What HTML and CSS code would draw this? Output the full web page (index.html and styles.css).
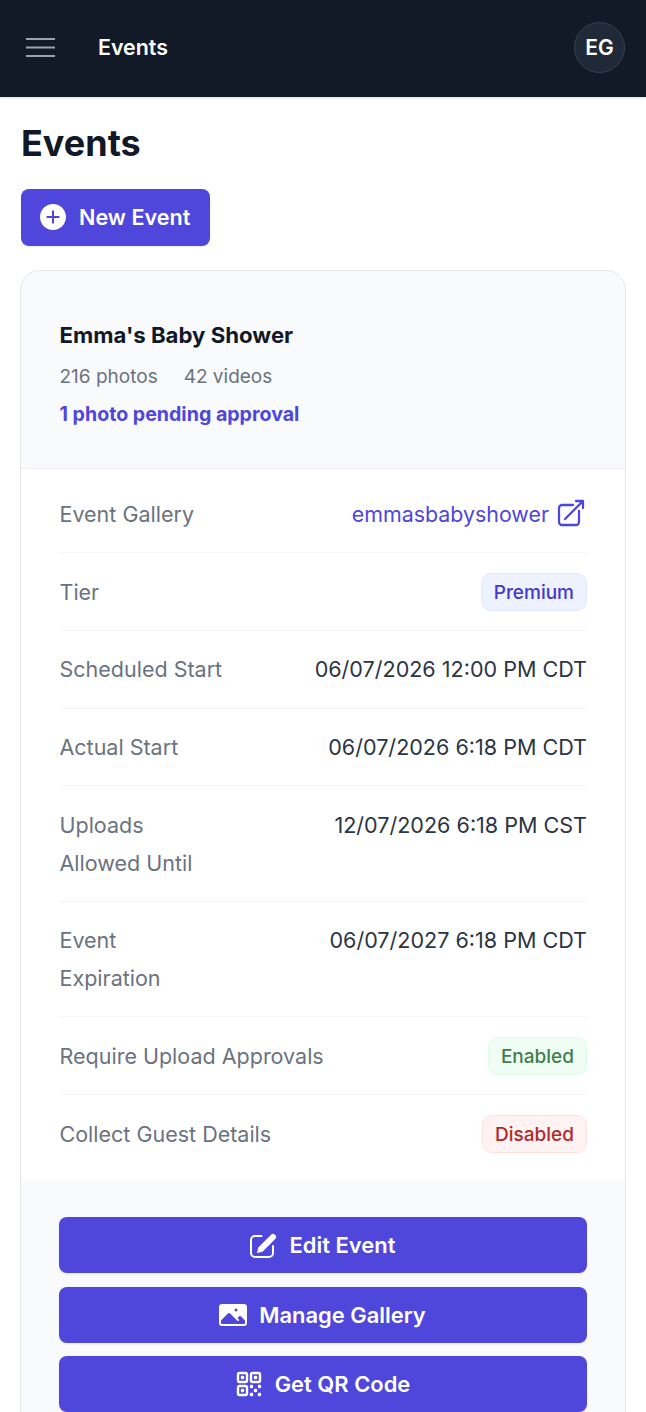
FILE: index.html
```html
<!DOCTYPE html>
<html lang="en">
<head>
<meta charset="utf-8">
<title>Events</title>
<link rel="stylesheet" href="styles.css">
</head>
<body>
<header class="topbar">
  <button class="menu" aria-label="Open menu">
    <svg class="menu-icon" viewBox="0 0 29 19" fill="none"><path d="M0 1h29M0 9.5h29M0 18h29"/></svg>
  </button>
  <span class="topbar-title">Events</span>
  <span class="avatar">EG</span>
</header>
<main class="page">
  <h1 class="page-title">Events</h1>
  <a class="btn btn-new" href="#">
    <svg class="icon-action" viewBox="0 0 24 24" fill="currentColor"><path fill-rule="evenodd" clip-rule="evenodd" d="M12 2.25c-5.385 0-9.75 4.365-9.75 9.75s4.365 9.75 9.75 9.75 9.75-4.365 9.75-9.75S17.385 2.25 12 2.25zM12.75 7.75a.75.75 0 00-1.5 0v3.5h-3.5a.75.75 0 000 1.5h3.5v3.5a.75.75 0 001.5 0v-3.5h3.5a.75.75 0 000-1.5h-3.5v-3.5z"/></svg>
    New Event
  </a>
  <section class="card">
    <div class="card-head">
      <h2 class="event-name">Emma's Baby Shower</h2>
      <div class="stats"><span>216 photos</span><span>42 videos</span></div>
      <a class="pending" href="#">1 photo pending approval</a>
    </div>
    <dl class="details">
      <div class="row">
        <dt>Event Gallery</dt>
        <dd><a class="gallery-link" href="#">emmasbabyshower
          <svg class="icon-ext" viewBox="0 0 24 24" fill="none" stroke="currentColor" stroke-width="1.7" stroke-linecap="round" stroke-linejoin="round"><path d="M13.5 6H5.25A2.25 2.25 0 003 8.25v10.5A2.25 2.25 0 005.25 21h10.5A2.25 2.25 0 0018 18.75V10.5m-10.5 6L21 3m0 0h-5.25M21 3v5.25"/></svg>
        </a></dd>
      </div>
      <div class="row"><dt>Tier</dt><dd><span class="badge badge-indigo">Premium</span></dd></div>
      <div class="row"><dt>Scheduled Start</dt><dd>06/07/2026 12:00 PM CDT</dd></div>
      <div class="row"><dt>Actual Start</dt><dd>06/07/2026 6:18 PM CDT</dd></div>
      <div class="row"><dt>Uploads<br>Allowed Until</dt><dd>12/07/2026 6:18 PM CST</dd></div>
      <div class="row"><dt>Event<br>Expiration</dt><dd>06/07/2027 6:18 PM CDT</dd></div>
      <div class="row"><dt>Require Upload Approvals</dt><dd><span class="badge badge-green">Enabled</span></dd></div>
      <div class="row"><dt>Collect Guest Details</dt><dd><span class="badge badge-red">Disabled</span></dd></div>
    </dl>
    <div class="actions">
      <a class="btn btn-wide" href="#">
        <svg class="icon-action" viewBox="0 0 32 32"><path fill="none" stroke="currentColor" stroke-width="2" stroke-linecap="round" d="M13.5 7H7a4 4 0 00-4 4v13a4 4 0 004 4h14a4 4 0 004-4v-7"/><path fill="currentColor" d="M9 24l1.3-5.5L23.3 5.5a2.4 2.4 0 013.4 0l.8.8a2.4 2.4 0 010 3.4L14.5 22.7z"/></svg>
        Edit Event
      </a>
      <a class="btn btn-wide" href="#">
        <svg class="icon-action" viewBox="0 0 24 24" fill="currentColor"><path fill-rule="evenodd" clip-rule="evenodd" d="M1.5 6a2.25 2.25 0 012.25-2.25h16.5A2.25 2.25 0 0122.5 6v12a2.25 2.25 0 01-2.25 2.25H3.75A2.25 2.25 0 011.5 18V6zM3 16.06V18c0 .414.336.75.75.75h16.5A.75.75 0 0021 18v-1.94l-2.69-2.689a1.5 1.5 0 00-2.12 0l-.88.879.97.97a.75.75 0 11-1.06 1.06l-5.16-5.159a1.5 1.5 0 00-2.12 0L3 16.061zm10.125-7.81a1.125 1.125 0 112.25 0 1.125 1.125 0 01-2.25 0z"/></svg>
        Manage Gallery
      </a>
      <a class="btn btn-wide" href="#">
        <svg class="icon-action" viewBox="0 0 24 24" fill="none" stroke="currentColor" stroke-width="1.8" stroke-linecap="round" stroke-linejoin="round"><path d="M3.75 4.875c0-.621.504-1.125 1.125-1.125h4.5c.621 0 1.125.504 1.125 1.125v4.5c0 .621-.504 1.125-1.125 1.125h-4.5A1.125 1.125 0 013.75 9.375v-4.5zM3.75 14.625c0-.621.504-1.125 1.125-1.125h4.5c.621 0 1.125.504 1.125 1.125v4.5c0 .621-.504 1.125-1.125 1.125h-4.5a1.125 1.125 0 01-1.125-1.125v-4.5zM13.5 4.875c0-.621.504-1.125 1.125-1.125h4.5c.621 0 1.125.504 1.125 1.125v4.5c0 .621-.504 1.125-1.125 1.125h-4.5A1.125 1.125 0 0113.5 9.375v-4.5z"/><path d="M6.75 6.75h.75v.75h-.75v-.75zM6.75 16.5h.75v.75h-.75v-.75zM16.5 6.75h.75v.75h-.75v-.75zM13.5 13.5h.75v.75h-.75v-.75zM13.5 19.5h.75v.75h-.75v-.75zM19.5 13.5h.75v.75h-.75v-.75zM19.5 19.5h.75v.75h-.75v-.75zM16.5 16.5h.75v.75h-.75v-.75z"/></svg>
        Get QR Code
      </a>
    </div>
  </section>
</main>
</body>
</html>
```
FILE: styles.css
```css
* { box-sizing: border-box; }
html, body { margin: 0; height: 1412px; overflow: hidden; }
body { background: #fff; color: #111827; font-family: Inter, "Liberation Sans", sans-serif; }
a { text-decoration: none; color: inherit; }

.topbar { height: 97px; background: #121927; display: flex; align-items: center; padding: 0 21px 3px 26px; box-shadow: 0 1px 3px rgba(0,0,0,.14); position: relative; }
.menu { border: 0; background: none; padding: 0; width: 29px; height: 19px; display: block; }
.menu-icon { display: block; width: 29px; height: 19px; stroke: #9ca3af; stroke-width: 2; }
.topbar-title { margin-left: 43px; color: #fff; font-size: 21.4px; font-weight: 600; flex: 1; }
.avatar { width: 51px; height: 51px; border-radius: 50%; background: #1f2937; border: 1.5px solid #374151; color: #fff; font-size: 21px; font-weight: 600; display: flex; align-items: center; justify-content: center; }

.page { padding: 0 20px; }
.page-title { margin: 0 0 0 1px; padding-top: 24px; font-size: 36px; line-height: 44px; font-weight: 700; color: #111827; }
.btn { display: flex; align-items: center; justify-content: center; background: #4f46dc; color: #fff; font-weight: 600; font-size: 21.95px; border-radius: 8px; box-shadow: 0 1px 2px rgba(0,0,0,.08); }
.btn-new { width: 189px; height: 57px; margin: 24px 0 24px 1px; padding: 0 0 1px 16px; gap: 10px; justify-content: flex-start; font-size: 21.6px; }

.card { width: 606px; height: 1300px; border: 1.5px solid #e5e7eb; border-radius: 20px; overflow: hidden; background: #f9fafb; }
.card-head { height: 198px; padding: 49px 38px 0 38.5px; border-bottom: 1.5px solid #f0f1f4; }
.event-name { margin: 0; font-size: 22.2px; line-height: 30px; font-weight: 700; color: #111827; }
.stats { display: flex; gap: 26px; margin-top: 13px; font-size: 19px; line-height: 27px; color: #6b7280; }
.pending { display: block; margin-top: 11px; font-size: 19.6px; line-height: 27px; font-weight: 700; color: #4f46dc; }

.details { margin: 0; padding: 6.9px 38px 6.5px 38.5px; background: #fff; }
.row { display: flex; justify-content: space-between; align-items: flex-start; padding: 19.3px 0; border-bottom: 1.5px solid #f3f4f6; font-size: 21.55px; line-height: 38px; }
.row:last-child { border-bottom: 0; padding-top: 20.1px; }
.row dt { color: #6b7280; font-size: 21.5px; }
.row dd { margin: 0; color: #2b3544; white-space: nowrap; }
.gallery-link { display: flex; align-items: center; gap: 6px; color: #4f46dc; font-size: 21.4px; }
.icon-ext { width: 32px; height: 32px; margin-bottom: 2px; }
.badge { display: block; height: 38px; padding: 0 12px; line-height: 37px; font-size: 19px; font-weight: 500; border-radius: 10px; border: 1.5px solid; }
.badge-indigo { background: #eef2ff; border-color: #e0e7ff; color: #4338ca; }
.badge-green { background: #f0fdf4; border-color: #dcfce7; color: #3f7f4c; }
.badge-red { background: #fef2f2; border-color: #fee2e2; color: #b02a2a; }

.actions { display: flex; flex-direction: column; gap: 13.7px; padding: 38px; }
.btn-wide { height: 56px; gap: 10px; padding-right: 3px; }
.icon-action { width: 32px; height: 32px; flex: none; }
```
